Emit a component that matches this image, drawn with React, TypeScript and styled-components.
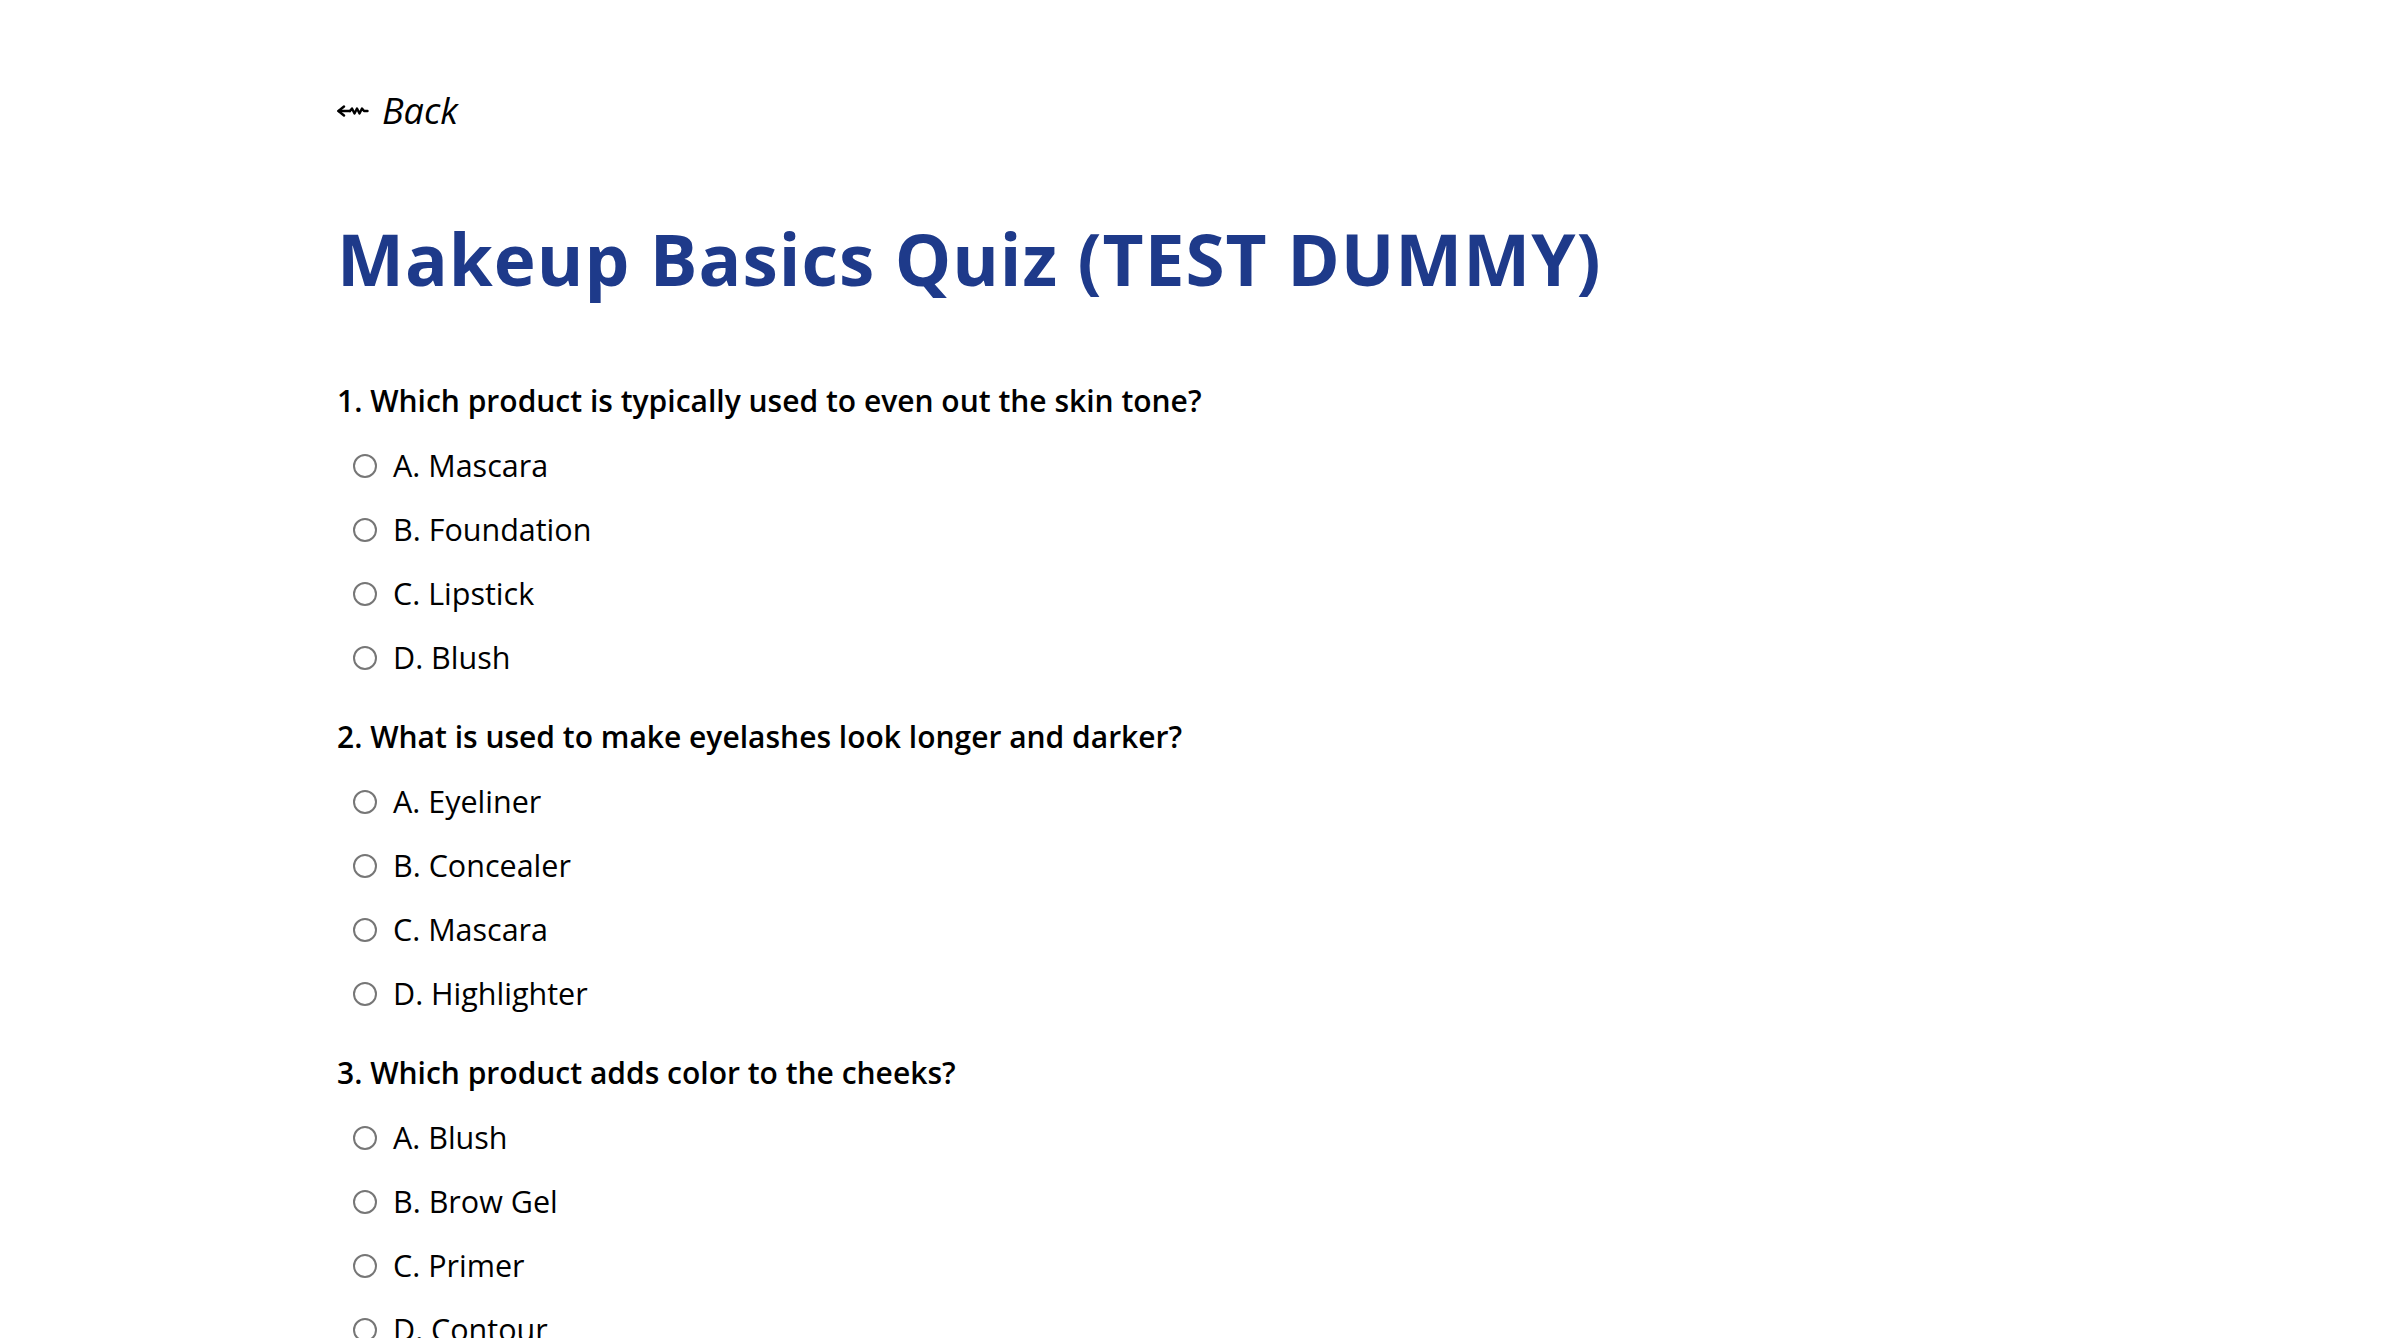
import React from "react";
import styled, { createGlobalStyle } from "styled-components";

const GlobalStyle = createGlobalStyle`
  html, body {
    margin: 0;
    padding: 0;
    background: #ffffff;
  }
  body {
    font-family: "Open Sans", "Noto Sans", Arial, sans-serif;
    color: #000000;
  }
`;

const Page = styled.main`
  width: 1726px;
  margin: 0 auto;
  padding: 85px 0 80px;
  box-sizing: border-box;
`;

const BackLink = styled.a`
  display: inline-flex;
  align-items: center;
  gap: 13px;
  font-size: 36px;
  line-height: 51px;
  font-style: italic;
  font-weight: 500;
  color: #000000;
  text-decoration: none;
  cursor: pointer;
`;

const Title = styled.h1`
  margin: 80px 0 0;
  font-size: 71px;
  line-height: 86px;
  font-weight: 700;
  color: #1e3a8a;
  letter-spacing: 1px;
`;

const QuizList = styled.div`
  margin-top: 76px;
  display: flex;
  flex-direction: column;
  gap: 34px;
`;

const QuestionBlock = styled.section`
  display: flex;
  flex-direction: column;
  gap: 18px;
`;

const QuestionText = styled.h3`
  margin: 0;
  font-size: 30px;
  line-height: 46px;
  font-weight: 600;
`;

const OptionRow = styled.label`
  display: flex;
  align-items: center;
  gap: 16px;
  padding-left: 16px;
  font-size: 30.5px;
  line-height: 46px;
  cursor: pointer;
`;

const Radio = styled.input`
  appearance: none;
  -webkit-appearance: none;
  margin: 0;
  width: 24px;
  height: 24px;
  flex: none;
  border: 2px solid #767676;
  border-radius: 50%;
  background: #ffffff;
  box-sizing: border-box;
  position: relative;
  top: 1px;
  &:checked {
    background: radial-gradient(circle, #1e3a8a 0 5px, #ffffff 6px);
    border-color: #1e3a8a;
  }
`;

const ArrowIcon = () => (
  <svg width="32" height="12" viewBox="0 0 32 12" fill="none" stroke="#000" strokeWidth="2.4" strokeLinecap="round" strokeLinejoin="round">
    <path d="M7 1.5 L1.5 6 L7 10.5" />
    <path d="M1.5 6 H13" />
    <path d="M13 6 L15 3.5 L17.5 8.5 L20 3.5 L22.5 8.5 L25 3.5 L27 6 H30.5" />
  </svg>
);

const questions = [
  {
    q: "1. Which product is typically used to even out the skin tone?",
    options: ["A. Mascara", "B. Foundation", "C. Lipstick", "D. Blush"],
  },
  {
    q: "2. What is used to make eyelashes look longer and darker?",
    options: ["A. Eyeliner", "B. Concealer", "C. Mascara", "D. Highlighter"],
  },
  {
    q: "3. Which product adds color to the cheeks?",
    options: ["A. Blush", "B. Brow Gel", "C. Primer", "D. Contour"],
  },
];

export default function App() {
  return (
    <>
      <GlobalStyle />
      <Page>
        <BackLink href="#">
          <ArrowIcon />
          <span>Back</span>
        </BackLink>
        <Title>Makeup Basics Quiz (TEST DUMMY)</Title>
        <QuizList>
          {questions.map((item, qi) => (
            <QuestionBlock key={qi}>
              <QuestionText>{item.q}</QuestionText>
              {item.options.map((opt, oi) => (
                <OptionRow key={oi}>
                  <Radio type="radio" name={`q${qi}`} value={opt} />
                  <span>{opt}</span>
                </OptionRow>
              ))}
            </QuestionBlock>
          ))}
        </QuizList>
      </Page>
    </>
  );
}
